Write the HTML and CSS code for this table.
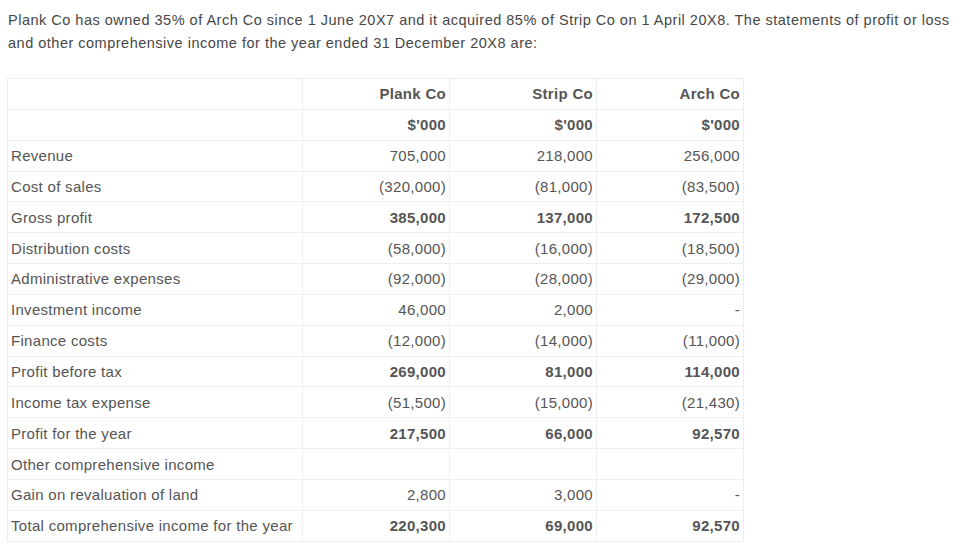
FILE: index.html
```html
<!DOCTYPE html>
<html>
<head>
<meta charset="utf-8">
<link rel="stylesheet" href="styles.css">
</head>
<body>
<p class="intro">Plank Co has owned 35% of Arch Co since 1 June 20X7 and it acquired 85% of Strip Co on 1 April 20X8. The statements of profit or loss and other comprehensive income for the year ended 31 December 20X8 are:</p>
<table class="pl">
<colgroup><col class="c-label"><col class="c-num"><col class="c-num"><col class="c-num"></colgroup>
<tr class="b"><td></td><td>Plank Co</td><td>Strip Co</td><td>Arch Co</td></tr>
<tr class="b"><td></td><td>$'000</td><td>$'000</td><td>$'000</td></tr>
<tr><td>Revenue</td><td>705,000</td><td>218,000</td><td>256,000</td></tr>
<tr><td>Cost of sales</td><td>(320,000)</td><td>(81,000)</td><td>(83,500)</td></tr>
<tr class="b"><td>Gross profit</td><td>385,000</td><td>137,000</td><td>172,500</td></tr>
<tr><td>Distribution costs</td><td>(58,000)</td><td>(16,000)</td><td>(18,500)</td></tr>
<tr><td>Administrative expenses</td><td>(92,000)</td><td>(28,000)</td><td>(29,000)</td></tr>
<tr><td>Investment income</td><td>46,000</td><td>2,000</td><td>-</td></tr>
<tr><td>Finance costs</td><td>(12,000)</td><td>(14,000)</td><td>(11,000)</td></tr>
<tr class="b"><td>Profit before tax</td><td>269,000</td><td>81,000</td><td>114,000</td></tr>
<tr><td>Income tax expense</td><td>(51,500)</td><td>(15,000)</td><td>(21,430)</td></tr>
<tr class="b"><td>Profit for the year</td><td>217,500</td><td>66,000</td><td>92,570</td></tr>
<tr><td>Other comprehensive income</td><td></td><td></td><td></td></tr>
<tr><td>Gain on revaluation of land</td><td>2,800</td><td>3,000</td><td>-</td></tr>
<tr class="b"><td>Total comprehensive income for the year</td><td>220,300</td><td>69,000</td><td>92,570</td></tr>
</table>
</body>
</html>
```

FILE: styles.css
```css
body {
  margin: 0;
  padding: 0 0 0 8px;
  font-family: "Liberation Sans", Arial, sans-serif;
  font-size: 15px;
  color: #555;
  background: #fff;
}
.intro {
  margin: 9px 0 0 0;
  font-size: 14.5px;
  letter-spacing: 0.5px;
  line-height: 23px;
  color: #474747;
}
.pl {
  margin: 23px 0 0 -1px;
  border-collapse: collapse;
  table-layout: fixed;
  width: 737px;
  letter-spacing: 0.3px;
}
.c-label { width: 295px; }
.c-num { width: 147px; }
.pl td {
  border: 1px solid #eceef0;
  height: 29.85px;
  padding: 0 3px 0 3px;
  text-align: right;
  vertical-align: middle;
  white-space: nowrap;
}
.pl td:first-child {
  text-align: left;
  padding-left: 3px;
}
.pl tr.b td:not(:first-child) {
  font-weight: bold;
}
```
